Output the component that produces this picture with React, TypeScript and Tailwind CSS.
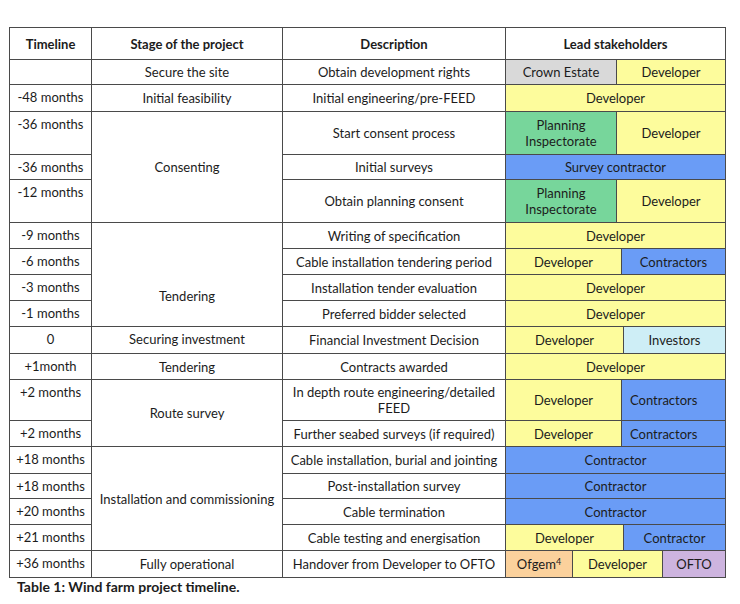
import React from "react";

type Seg = { t: string; w?: string; bg: string; left?: boolean; sup?: string };
type Row = {
  time: string;
  stage?: { t: string; span: number; cls?: string };
  desc: React.ReactNode;
  h: string;
  segs: Seg[];
};

const YEL = "bg-[#fdfc9c]";
const BLUE = "bg-[#6a9cf6]";
const GREEN = "bg-[#77d69b]";

const rows: Row[] = [
  {
    time: "",
    stage: { t: "Secure the site", span: 1 },
    desc: "Obtain development rights",
    h: "h-[24px]",
    segs: [
      { t: "Crown Estate", w: "w-[111px]", bg: "bg-[#d9d9d9]" },
      { t: "Developer", bg: YEL },
    ],
  },
  {
    time: "-48 months",
    stage: { t: "Initial feasibility", span: 1 },
    desc: "Initial engineering/pre-FEED",
    h: "h-[26px]",
    segs: [{ t: "Developer", bg: YEL }],
  },
  {
    time: "-36 months",
    stage: { t: "Consenting", span: 3 },
    desc: "Start consent process",
    h: "h-[42px]",
    segs: [
      { t: "Planning Inspectorate", w: "w-[111px]", bg: GREEN },
      { t: "Developer", bg: YEL },
    ],
  },
  {
    time: "-36 months",
    desc: "Initial surveys",
    h: "h-[24px]",
    segs: [{ t: "Survey contractor", bg: BLUE }],
  },
  {
    time: "-12 months",
    desc: "Obtain planning consent",
    h: "h-[42px]",
    segs: [
      { t: "Planning Inspectorate", w: "w-[111px]", bg: GREEN },
      { t: "Developer", bg: YEL },
    ],
  },
  {
    time: "-9 months",
    stage: { t: "Tendering", span: 4, cls: "align-bottom pb-[22px]" },
    desc: "Writing of specification",
    h: "h-[25px]",
    segs: [{ t: "Developer", bg: YEL }],
  },
  {
    time: "-6 months",
    desc: "Cable installation tendering period",
    h: "h-[25px]",
    segs: [
      { t: "Developer", w: "w-[116px]", bg: YEL },
      { t: "Contractors", bg: BLUE },
    ],
  },
  {
    time: "-3 months",
    desc: "Installation tender evaluation",
    h: "h-[25px]",
    segs: [{ t: "Developer", bg: YEL }],
  },
  {
    time: "-1 months",
    desc: "Preferred bidder selected",
    h: "h-[25px]",
    segs: [{ t: "Developer", bg: YEL }],
  },
  {
    time: "0",
    stage: { t: "Securing investment", span: 1, cls: "align-top pt-[4px]" },
    desc: "Financial Investment Decision",
    h: "h-[26px]",
    segs: [
      { t: "Developer", w: "w-[118px]", bg: YEL },
      { t: "Investors", bg: "bg-[#ceeef6]" },
    ],
  },
  {
    time: "+1month",
    stage: { t: "Tendering", span: 1 },
    desc: "Contracts awarded",
    h: "h-[25px]",
    segs: [{ t: "Developer", bg: YEL }],
  },
  {
    time: "+2 months",
    stage: { t: "Route survey", span: 2 },
    desc: (
      <>
        In depth route engineering/detailed
        <br />
        FEED
      </>
    ),
    h: "h-[40px]",
    segs: [
      { t: "Developer", w: "w-[116px]", bg: YEL },
      { t: "Contractors", bg: BLUE, left: true },
    ],
  },
  {
    time: "+2 months",
    desc: "Further seabed surveys (if required)",
    h: "h-[25px]",
    segs: [
      { t: "Developer", w: "w-[116px]", bg: YEL },
      { t: "Contractors", bg: BLUE, left: true },
    ],
  },
  {
    time: "+18 months",
    stage: { t: "Installation and commissioning", span: 4 },
    desc: "Cable installation, burial and jointing",
    h: "h-[26px]",
    segs: [{ t: "Contractor", bg: BLUE }],
  },
  {
    time: "+18 months",
    desc: "Post-installation survey",
    h: "h-[24px]",
    segs: [{ t: "Contractor", bg: BLUE }],
  },
  {
    time: "+20 months",
    desc: "Cable termination",
    h: "h-[25px]",
    segs: [{ t: "Contractor", bg: BLUE }],
  },
  {
    time: "+21 months",
    desc: "Cable testing and energisation",
    h: "h-[25px]",
    segs: [
      { t: "Developer", w: "w-[118px]", bg: YEL },
      { t: "Contractor", bg: BLUE },
    ],
  },
  {
    time: "+36 months",
    stage: { t: "Fully operational", span: 1 },
    desc: "Handover from Developer to OFTO",
    h: "h-[26px]",
    segs: [
      { t: "Ofgem", w: "w-[67px]", bg: "bg-[#fbd19c]", sup: "4" },
      { t: "Developer", w: "w-[90px]", bg: YEL },
      { t: "OFTO", bg: "bg-[#cdb4df]" },
    ],
  },
];

const cell = "border border-[#4a4a4a] px-1";

export default function App() {
  return (
    <div className="min-h-[604px] w-[740px] bg-white pl-[9px] pt-[27px] font-['Lato',sans-serif] text-[13px] leading-[16px] text-[#1c1c1c]">
      <table className="w-[716px] table-fixed border-collapse border border-[#4a4a4a]">
        <colgroup>
          <col className="w-[82px]" />
          <col className="w-[191px]" />
          <col className="w-[223px]" />
          <col className="w-[220px]" />
        </colgroup>
        <thead>
          <tr className="h-[32px]">
            {["Timeline", "Stage of the project", "Description", "Lead stakeholders"].map((h) => (
              <th key={h} className={`${cell} text-center font-bold`}>
                {h}
              </th>
            ))}
          </tr>
        </thead>
        <tbody>
          {rows.map((r, i) => (
            <tr key={i}>
              <td className={`${cell} pt-[4px] text-center align-top`}>{r.time}</td>
              {r.stage && (
                <td rowSpan={r.stage.span} className={`${cell} text-center ${r.stage.cls ?? "align-middle"}`}>
                  {r.stage.t}
                </td>
              )}
              <td className={`${cell} text-center align-middle`}>{r.desc}</td>
              <td className="border border-[#4a4a4a] p-0">
                <div className={`flex ${r.h}`}>
                  {r.segs.map((s, j) => (
                    <div
                      key={j}
                      className={`flex items-center px-2 ${s.bg} ${s.w ?? "flex-1"} ${
                        j < r.segs.length - 1 ? "border-r border-[#4a4a4a]" : ""
                      } ${s.left ? "justify-start" : "justify-center text-center"}`}
                    >
                      <span>
                        {s.t}
                        {s.sup && <sup className="text-[9px]">{s.sup}</sup>}
                      </span>
                    </div>
                  ))}
                </div>
              </td>
            </tr>
          ))}
        </tbody>
      </table>
      <p className="pl-[8px] text-[14px] font-bold leading-[18px]">Table 1: Wind farm project timeline.</p>
    </div>
  );
}
